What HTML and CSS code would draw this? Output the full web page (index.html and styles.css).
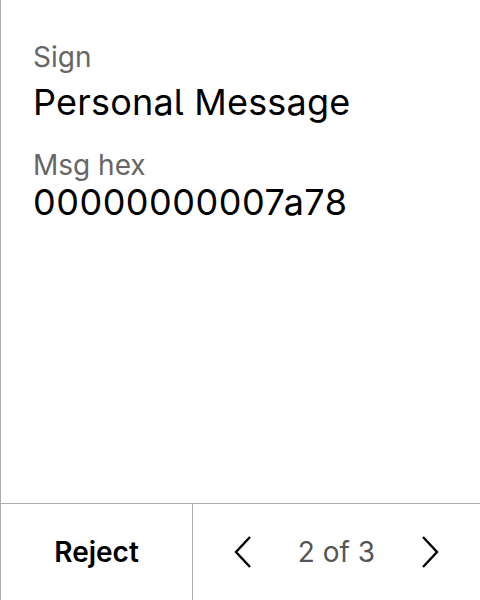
FILE: index.html
```html
<!DOCTYPE html>
<html>
<head>
<meta charset="utf-8">
<link rel="stylesheet" href="styles.css">
</head>
<body>
<div class="screen">
  <main class="content">
    <div class="label">Sign</div>
    <div class="value first">Personal Message</div>
    <div class="label second">Msg hex</div>
    <div class="value hex">00000000007a78</div>
  </main>
  <footer class="footer">
    <button class="reject">Reject</button>
    <div class="pager">
      <span class="nav">
        <svg width="18" height="32" viewBox="0 0 18 32"><path d="M16 1 L2 16 L16 31" fill="none" stroke="#000" stroke-width="2.4"/></svg>
      </span>
      <span class="count">2 of 3</span>
      <span class="nav">
        <svg width="18" height="32" viewBox="0 0 18 32"><path d="M2 1 L16 16 L2 31" fill="none" stroke="#000" stroke-width="2.4"/></svg>
      </span>
    </div>
  </footer>
</div>
</body>
</html>
```
FILE: styles.css
```css
html, body {
  margin: 0;
  padding: 0;
  background: #fff;
}
body {
  font-family: Inter, "Noto Sans", sans-serif;
  font-feature-settings: "cv05" 1;
}
.screen {
  width: 480px;
  height: 600px;
  box-sizing: border-box;
  border-left: 1px solid #aaa;
  display: flex;
  flex-direction: column;
}
.content {
  flex: 1;
  padding: 41px 0 0 32px;
}
.label {
  font-size: 28px;
  color: #666;
  line-height: 32px;
}
.value {
  font-size: 36px;
  color: #000;
  line-height: 40px;
  letter-spacing: 0.2px;
}
.value.first {
  margin-top: 9px;
}
.label.second {
  margin-top: 27px;
}
.value.hex {
  margin-top: 1px;
  letter-spacing: 0.5px;
}
.footer {
  height: 96px;
  border-top: 1px solid #aaa;
  display: flex;
}
.reject {
  width: 192px;
  border: none;
  border-right: 1px solid #aaa;
  background: #fff;
  font-family: Inter, "Noto Sans", sans-serif;
  font-feature-settings: "cv05" 1;
  font-size: 28px;
  font-weight: 600;
  color: #000;
  padding: 0;
}
.pager {
  flex: 1;
  display: flex;
  align-items: center;
  justify-content: space-between;
  padding: 0 41px 0 41px;
}
.nav {
  display: flex;
  width: 18px;
}
.count {
  font-size: 28px;
  color: #555;
}
```
